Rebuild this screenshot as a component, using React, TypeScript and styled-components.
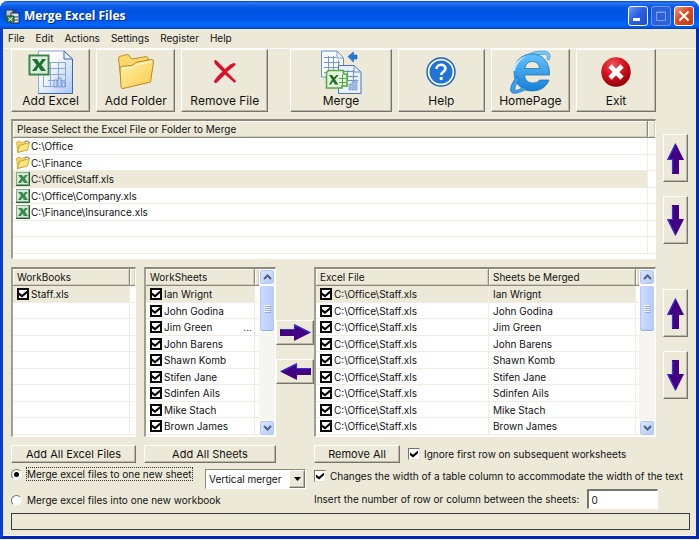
import React, { useState } from 'react';
import styled, { createGlobalStyle, css } from 'styled-components';

const face = '#ece9d8';
const line = '#f0ede0';
const shadow = '#8d8a7d';

const GlobalStyle = createGlobalStyle`
  * { box-sizing: border-box; }
  body { margin: 0; background: #f2f4f8; font: 10px/14px Inter, 'Liberation Sans', sans-serif; color: #111; }
  button, input, select { font: inherit; color: inherit; margin: 0; padding: 0; }
  svg { display: block; }
`;

const raised = css`
  background: ${face};
  border: 1px solid;
  border-color: #fff #77756b #77756b #fff;
  box-shadow: inset -1px -1px 0 #bbb8a9;
  border-radius: 0;
`;

const Frame = styled.div`
  min-height: 100vh;
  padding: 1px 0;
  display: flex;
  flex-direction: column;
`;

const WindowBox = styled.main`
  flex: 1;
  display: flex;
  flex-direction: column;
  background: ${face};
  border: 3px solid #0a3fd6;
  border-top: 0;
  border-right-color: #0427b4;
  border-bottom-color: #0427b4;
  border-radius: 8px 8px 0 0;
  box-shadow: inset 0 -1px 0 #f6f4ea;
`;

const TitleBar = styled.header`
  height: 28px;
  margin: 0 -3px;
  padding: 2px 5px 0;
  display: flex;
  align-items: center;
  gap: 4px;
  border-radius: 8px 8px 0 0;
  background: linear-gradient(#0a41c8 0, #2c7bf5 2px, #0a5be8 5px, #0053e0 10px, #0057e8 18px, #0567fb 24px, #0458e4 26px, #0340b8 28px);
`;

const Title = styled.h1`
  flex: 1;
  margin: 0;
  font: bold 12px/18px 'Open Sans', 'Noto Sans', sans-serif;
  color: #fff;
  text-shadow: 1px 1px 0 #0a2a80;
`;

const Caption = styled.div`
  display: flex;
  gap: 3px;
`;

const CaptionButton = styled.button<{ $tone?: 'close' | 'dim' }>`
  width: 20px;
  height: 20px;
  display: grid;
  place-items: center;
  border: 1px solid ${p => (p.$tone === 'dim' ? '#6f97ee' : '#fff')};
  border-radius: 3px;
  background: ${p =>
    p.$tone === 'close'
      ? 'linear-gradient(135deg, #ec9a82, #dd4a22 45%, #c23a14)'
      : p.$tone === 'dim'
        ? '#2b5fdc'
        : 'linear-gradient(135deg, #6f9af8, #2b60e4 45%, #1c4ccc)'};
`;

const MenuBar = styled.nav`
  height: 19px;
  padding: 0 5px 2px;
  display: flex;
  align-items: center;
  gap: 11px;
`;

const MenuItem = styled.button`
  border: 0;
  background: none;
  line-height: 14px;
`;

const Toolbar = styled.div`
  display: flex;
  gap: 6px;
  padding: 0 40px 0 8px;
  border-top: 1px solid #fbfaf5;
`;

const ToolButton = styled.button<{ $grow: number; $apart?: boolean }>`
  ${raised}
  flex: ${p => p.$grow} 1 0;
  min-width: 0;
  height: 63px;
  margin-left: ${p => (p.$apart ? 16 : 0)}px;
  display: flex;
  flex-direction: column;
  align-items: center;
  font-size: 12px;
  line-height: 16px;
  white-space: nowrap;
`;

const ToolIcon = styled.span`
  height: 43px;
  display: grid;
  place-items: center;
`;

const Body = styled.div`
  padding: 7px 8px 0;
  display: grid;
  grid-template-columns: minmax(0, 303fr) minmax(0, 342fr) 32px;
  row-gap: 8px;
`;

const Panel = styled.section<{ $wide?: boolean; $tall?: boolean }>`
  ${p => p.$wide && 'grid-column: 1 / 3;'}
  min-width: 0;
  min-height: ${p => (p.$tall ? 170 : 140)}px;
  display: flex;
  background: #fff;
  border: 1px solid #fff;
  border-width: 2px 1px 1px 2px;
  border-top-color: ${shadow};
  border-left-color: #a19e90;
`;

const Table = styled.table`
  flex: 1;
  align-self: flex-start;
  width: 0;
  table-layout: fixed;
  border-collapse: separate;
  border-spacing: 0;
`;

const Col = styled.col<{ $w?: number }>`
  ${p => p.$w && `width: ${p.$w}px;`}
`;

const HeadCell = styled.th`
  height: 17px;
  padding: 0 0 0 4px;
  text-align: left;
  font-weight: normal;
  white-space: nowrap;
  overflow: hidden;
  background: ${face};
  border-right: 1px solid ${shadow};
  border-bottom: 1px solid ${shadow};
  box-shadow: inset 1px 1px 0 #faf9f2, inset -1px -1px 0 #d0cdbd;
  &:last-child { border-right: 0; }
`;

const Row = styled.tr<{ $selected?: boolean }>`
  height: 17px;
  &:nth-child(even) { height: 16px; }
  ${p => p.$selected && `td:not(:last-child) { background: ${face}; }`}
`;

const Cell = styled.td<{ $inset?: number }>`
  padding: 0 0 0 ${p => p.$inset ?? 0}px;
  border-right: 1px solid ${line};
  border-bottom: 1px solid ${line};
  line-height: 14px;
  white-space: nowrap;
  overflow: hidden;
  &:last-child { border-right: 0; }
`;

const Entry = styled.span<{ $gap: number }>`
  height: 14px;
  display: flex;
  align-items: center;
  gap: ${p => p.$gap}px;
`;

const More = styled.span`
  margin-left: auto;
  padding-right: 2px;
`;

const Tick = styled.input<{ $bold?: boolean }>`
  appearance: none;
  flex: none;
  width: 12px;
  height: 12px;
  display: grid;
  place-items: center;
  background: #fff;
  border: 1px solid;
  border-color: #77756b #e4e1d2 #e4e1d2 #77756b;
  ${p => p.$bold && 'border: 2px solid #0a0a0a;'}
  &:checked::before {
    content: '';
    width: 8px;
    height: 7px;
    background: #000;
    clip-path: polygon(0 30%, 38% 62%, 100% 0, 100% 38%, 38% 100%, 0 68%);
  }
`;

const Radio = styled.input`
  appearance: none;
  flex: none;
  width: 11px;
  height: 11px;
  display: grid;
  place-items: center;
  background: #fff;
  border: 1px solid;
  border-color: #77756b #f4f2e8 #f4f2e8 #77756b;
  border-radius: 50%;
  &:checked::before {
    content: '';
    width: 5px;
    height: 5px;
    border-radius: 50%;
    background: #000;
  }
`;

const ScrollBar = styled.div`
  width: 16px;
  flex: none;
  display: flex;
  flex-direction: column;
  background: #f6f5ef;
`;

const ScrollButton = styled.button`
  height: 16px;
  display: grid;
  place-items: center;
  background: linear-gradient(135deg, #dfe9ff, #b2c8f6);
  border: 1px solid #fff;
  border-radius: 3px;
  box-shadow: inset 0 0 0 1px #b4c8f2;
`;

const Thumb = styled.div`
  height: 47px;
  display: grid;
  place-items: center;
  background: linear-gradient(90deg, #cddcff, #b6cbfa);
  border: 1px solid #fff;
  border-radius: 3px;
  box-shadow: inset 0 -1px 0 #8fa9de, inset 1px 0 0 #b4c8f2;
`;

const Gap = styled.div`
  flex: 1;
`;

const Movers = styled.div<{ $raise?: boolean }>`
  margin-left: 7px;
  grid-column: 3;
  display: flex;
  flex-direction: column;
  justify-content: center;
  gap: 14px;
  padding-bottom: ${p => (p.$raise ? 16 : 0)}px;
`;

const MoveButton = styled.button`
  ${raised}
  height: 48px;
  display: grid;
  place-items: center;
`;

const Sources = styled.div`
  display: grid;
  grid-template-columns: minmax(0, 125fr) 8px minmax(0, 132fr) 38px;
  > :nth-child(2) { grid-column: 3; }
`;

const Transfer = styled.div`
  grid-column: 4;
  display: flex;
  flex-direction: column;
  justify-content: center;
  gap: 14px;
`;

const TransferButton = styled.button`
  ${raised}
  height: 25px;
  display: grid;
  place-items: center;
`;

const Options = styled.div<{ $gap: number; $span?: boolean }>`
  ${p => p.$span && 'grid-column: 2 / 4;'}
  display: flex;
  flex-direction: column;
  gap: ${p => p.$gap}px;
`;

const PushButton = styled.button<{ $w?: number }>`
  ${raised}
  ${p => p.$w && `width: ${p.$w}px;`}
  height: 18px;
  font-size: 11px;
  line-height: 14px;
  white-space: nowrap;
`;

const Line = styled.div<{ $h: number }>`
  height: ${p => p.$h}px;
  display: flex;
  align-items: center;
  gap: 8px;
`;

const Choice = styled.label`
  height: 14px;
  display: flex;
  align-items: center;
  gap: 4px;
  white-space: nowrap;
`;

const Focus = styled.span<{ $on?: boolean }>`
  height: 14px;
  line-height: 14px;
  outline: ${p => (p.$on ? '1px dotted #333' : 'none')};
  outline-offset: -1px;
  padding: 0 1px;
`;

const SelectBox = styled.div`
  display: grid;
  width: 101px;
  height: 20px;
  margin: 2px 0 0 auto;
  background: #fff;
  border: 1px solid;
  border-color: #8d8a7d #fff #fff #8d8a7d;
  > * { grid-area: 1 / 1; }
`;

const Select = styled.select`
  appearance: none;
  border: 0;
  background: none;
  padding-left: 3px;
  outline: 0;
`;

const SelectArrow = styled.span`
  ${raised}
  justify-self: end;
  width: 16px;
  display: grid;
  place-items: center;
  pointer-events: none;
`;

const MergeMode = styled.div`
  display: flex;
  height: 22px;
  padding-right: 8px;
`;

const NumberInput = styled.input`
  flex: none;
  width: 71px;
  height: 20px;
  padding: 0 2px;
  background: #fff;
  border: 1px solid;
  border-color: #77756b #fff #fff #77756b;
  border-width: 2px 1px 1px 2px;
  outline: 0;
`;

const StatusBar = styled.footer`
  height: 17px;
  margin: 4px 6px 5px 8px;
  border: 1px solid #3c3b36;
`;

const Chevron = ({ down }: { down?: boolean }) => (
  <svg width="9" height="6" viewBox="0 0 9 6"><path d={down ? 'M1 1l3.5 3.5L8 1' : 'M1 5l3.5-3.5L8 5'} fill="none" stroke="#4d6185" strokeWidth="2" /></svg>
);

const angles = { up: 0, right: 90, down: 180, left: 270 };

const edges = {
  up: 'M5.5 30V16.5H1L8.5 1',
  down: 'M11.5 30V16.5H16L8.5 1',
  right: 'M5.5 30V16.5H1L8.5 1',
  left: 'M11.5 30V16.5H16L8.5 1',
};

function Arrow({ dir }: { dir: keyof typeof angles }) {
  const flat = dir === 'left' || dir === 'right';
  return (
    <svg width={flat ? 31 : 17} height={flat ? 17 : 31} viewBox={flat ? '-7 7 31 17' : '0 0 17 31'}>
      <g transform={`rotate(${angles[dir]} 8.5 15.5)`}>
        <path d="M8.5 0L17 17H12V31H5V17H0Z" fill="#430080" />
        <path d={edges[dir]} fill="none" stroke="#3334e6" strokeWidth="1.2" />
      </g>
    </svg>
  );
}

const SheetIcon = () => (
  <svg width="46" height="44" viewBox="0 0 46 44">
    <defs><linearGradient id="page" x1="0" y1="0" x2="1" y2="1"><stop offset=".3" stopColor="#fff" /><stop offset="1" stopColor="#a9c6f4" /></linearGradient></defs>
    <path d="M10.5 1H36L44.5 9V43.5H10.5Z" fill="url(#page)" stroke="#8baee0" />
    <path d="M44.5 9V43.5H10.5" fill="none" stroke="#3f66aa" />
    <path d="M36 1V9H44.5Z" fill="#eaf1fc" stroke="#3f66aa" />
    <path d="M20 12.5H38M20 18.5H38M20 24.5H38M20 30.5H38M15 36.5H38M22.5 12V36M30.5 12V36M37.5 12V36M15.5 26V36" stroke="#86a8dc" fill="none" />
    <path d="M26 30h3v7h-3zM30 28h3v9h-3zM34 32h3v5h-3z" fill="#c9dbf6" stroke="#5f86c4" strokeWidth=".8" />
    <rect x="1.5" y="5.5" width="19" height="19" fill="#fff" stroke="#3c8148" strokeWidth="2" />
    <rect x="3" y="7" width="16" height="16" fill="#d9efdc" />
    <path d="M4 9h5l2.500 4L14 9h4l-4.500 6 4.500 6h-5L10.500 17 8 21H4l4.500-6z" fill="#216f33" />
  </svg>
);

const FolderIcon = () => (
  <svg width="38" height="38" viewBox="0 0 38 38">
    <defs><linearGradient id="fold" x1="0" y1="0" x2="1" y2="1"><stop offset="0" stopColor="#fff3a8" /><stop offset="1" stopColor="#fbc94c" /></linearGradient></defs>
    <path d="M1.500 6Q1.500 3 4 3L10 1.500Q12 1.500 13 4L15 6 29 3.500Q31 3.500 31 6L32 27 5 34Z" fill="#fbd76b" stroke="#c08f2c" />
    <path d="M3 16Q3 13.500 5 13.300L15 12.500 19 9.500 34 6.500Q37 6.500 36.500 9L33.500 29 6 35.500Q4.500 36 4 34Z" fill="url(#fold)" stroke="#b98522" />
    <path d="M5 15.500L15.500 14.500 19.500 11.500 35 8.500" fill="none" stroke="#fffbe0" />
  </svg>
);

const RemoveIcon = () => (
  <svg width="24" height="25" viewBox="0 0 24 25">
    <path d="M1 2Q2 0 4 2L12 10Q18 4 21 4Q23 4 22.500 6L14 13 23 22Q23 24 21 23.500L12 15.500 4 23.500Q1 25 1 22Q4 17 9.500 12.500L2 5Z" fill="#d9102c" />
  </svg>
);

const MergeIcon = () => (
  <svg width="42" height="44" viewBox="0 0 42 44">
    <path d="M1.500 1H17L23.500 8V27H1.500Z" fill="#f6f9ff" stroke="#6f8fc4" />
    <path d="M17 1V8H23.500M4 7.500H16M4 12.500H20M4 17.500H20M4 22.500H20M8.500 6V24M13.500 6V24M18.500 10V24" fill="none" stroke="#7799cf" />
    <path d="M18.500 15.500H34L41 22V43.500H18.500Z" fill="#e9f1ff" stroke="#4f75b4" />
    <path d="M34 15.500V22H41M22 21.500H33M22 26.500H38M26 30.500H38M27.500 20V31M33.500 20V32" fill="none" stroke="#6c8fca" />
    <path d="M29 34h2v6h-2zM32 32h2v8h-2zM35 30h2v10h-2z" fill="#b3caef" stroke="#6083bf" strokeWidth=".6" />
    <path d="M28 6.500L33.500 2V5H37V9H33.500V12Z" fill="#2878dc" stroke="#1557b0" strokeWidth=".6" />
    <path d="M6.500 38V24Q6.500 20.500 10 20.500H23.500V24H27V36H22V38Z" fill="#e6f5df" stroke="#57a83f" strokeWidth="1.600" />
    <path d="M9 25h3l2 2.500L16.500 25h2l-3.500 4.500 3.500 5H15L13 31.500 11 34.500H9l3-5z" fill="#1f6f28" />
    <path d="M19 28.500H26M19 32.500H26M22.500 25V37" stroke="#57a83f" />
  </svg>
);

const HelpIcon = () => (
  <svg width="30" height="30" viewBox="0 0 30 30">
    <circle cx="15" cy="15" r="14" fill="#f6faff" stroke="#1c5fb8" strokeWidth="1.400" />
    <circle cx="15" cy="15" r="11.500" fill="#2173d6" />
    <path d="M10.500 12C10.500 6.500 19.500 6.500 19.500 11.500C19.500 14.800 15.200 14.600 15.200 18" fill="none" stroke="#fff" strokeWidth="2.600" />
    <circle cx="15.200" cy="21.500" r="1.700" fill="#fff" />
  </svg>
);

const BrowserIcon = () => (
  <svg width="44" height="44" viewBox="0 0 44 44">
    <defs><linearGradient id="ie" x1="0" y1="0" x2="0" y2="1"><stop offset="0" stopColor="#62c2fa" /><stop offset="1" stopColor="#167fd8" /></linearGradient></defs>
    <path d="M5 20C10 8 24 0 36 1C42 1.500 43.500 6 41 10L39 9C40 5 38 4 34 4.500C24 5 12 12 5 20Z" fill="#74cbf7" stroke="#2d87c6" strokeWidth=".6" />
    <path d="M6 22C6 11 14 4 24 4C34.500 4 42 12 41.500 25H16.500C17 30.500 20.500 33 25 33C28 33 30.500 32 31.500 30H41C38.500 37 32 41 24.500 41C13.500 41 6 33.500 6 22ZM17 18.500H31.500C31 13.500 28 11.500 24.300 11.500C20.500 11.500 17.500 14 17 18.500Z" fill="url(#ie)" stroke="#1669b4" strokeWidth=".7" fillRule="evenodd" />
    <path d="M9 26C2 35 1 41.500 4.500 43C8.500 44.500 15 40.500 19 39.500L15.500 37C10 40.500 7.500 41 7 39.500C6.500 38 8 34 11 30Z" fill="#3a9fe8" stroke="#1669b4" strokeWidth=".6" />
    <path d="M4 21C6 12 14 7 18 6C12 10 8 15 7 21Z" fill="#c6ebfc" />
  </svg>
);

const ExitIcon = () => (
  <svg width="30" height="30" viewBox="0 0 30 30">
    <defs><radialGradient id="exit" cx=".4" cy=".25" r=".8"><stop offset="0" stopColor="#f0505a" /><stop offset=".5" stopColor="#d4101c" /><stop offset="1" stopColor="#8c0008" /></radialGradient></defs>
    <circle cx="15" cy="15" r="14.700" fill="url(#exit)" />
    <path d="M9 9L21 21M21 9L9 21" stroke="#fff" strokeWidth="4.600" />
  </svg>
);

const SmallFolder = () => (
  <svg width="14" height="13" viewBox="0 0 14 13">
    <path d="M.5 2L4 1 5 2.500 9 1.500V10L1.500 12.500Z" fill="#f6d65a" stroke="#c9a63a" strokeWidth=".7" />
    <path d="M1.500 12.500L3.500 5.500 13.500 2.500 11.500 10Z" fill="#ffe678" stroke="#a8871e" strokeWidth=".7" />
    <path d="M9 1.500Q12 0 13.500 2.500" fill="none" stroke="#6d6840" />
  </svg>
);

const SmallSheet = () => (
  <svg width="14" height="14" viewBox="0 0 14 14">
    <rect width="14" height="14" fill="#7fae88" />
    <path d="M1 1H12V12H1Z" fill="#d5e8d6" />
    <path d="M2 3h4l1.500 2L9 3h3L9 6.500 12 11H8L6.500 8.500 5 11H2l3-4.500z" fill="#3a8a4b" />
    <path d="M13.500 0V13.500H0" fill="none" stroke="#2c5c38" />
  </svg>
);

const AppIcon = () => (
  <svg width="15" height="15" viewBox="0 0 15 15">
    <path d="M1 1h7v9H1z" fill="#b9c6da" stroke="#26344e" />
    <path d="M6 4h8v10H6z" fill="#dfe6f0" stroke="#1e2b44" />
    <path d="M9 3l3-3M8 8h5M8 11h5" stroke="#2b3d5f" />
    <path d="M2 7h7v6H2z" fill="#3f8b45" stroke="#184a22" />
    <path d="M3.500 8.500l4 3.500M7.500 8.500l-4 3.500" stroke="#fff" />
  </svg>
);

function Scroller() {
  return (
    <ScrollBar>
      <ScrollButton aria-label="Scroll up"><Chevron /></ScrollButton>
      <Thumb>
        <svg width="7" height="8" viewBox="0 0 7 8"><path d="M0 .5H6M0 2.500H6M0 4.500H6M0 6.500H6" stroke="#f2f6ff" /><path d="M1 1.500H7M1 3.500H7M1 5.500H7M1 7.500H7" stroke="#93ade2" /></svg>
      </Thumb>
      <Gap />
      <ScrollButton aria-label="Scroll down"><Chevron down /></ScrollButton>
    </ScrollBar>
  );
}

function MoverPair({ raise, of }: { raise?: boolean; of: string }) {
  return (
    <Movers $raise={raise}>
      <MoveButton aria-label={`Move ${of} up`}><Arrow dir="up" /></MoveButton>
      <MoveButton aria-label={`Move ${of} down`}><Arrow dir="down" /></MoveButton>
    </Movers>
  );
}

const tools = [
  { name: 'Add Excel', grow: 79, Icon: SheetIcon },
  { name: 'Add Folder', grow: 79, Icon: FolderIcon },
  { name: 'Remove File', grow: 87, Icon: RemoveIcon },
  { name: 'Merge', grow: 102, Icon: MergeIcon, apart: true },
  { name: 'Help', grow: 87, Icon: HelpIcon },
  { name: 'HomePage', grow: 79, Icon: BrowserIcon },
  { name: 'Exit', grow: 80, Icon: ExitIcon },
];

const paths = ['C:\\Office', 'C:\\Finance', 'C:\\Office\\Staff.xls', 'C:\\Office\\Company.xls', 'C:\\Finance\\Insurance.xls', '', ''];
const sheets = ['Ian Wrignt', 'John Godina', 'Jim Green', 'John Barens', 'Shawn Komb', 'Stifen Jane', 'Sdinfen Ails', 'Mike Stach', 'Brown James'];
const books = ['Staff.xls', ...Array(8).fill('')];

export default function App() {
  const [mode, setMode] = useState('sheet');
  return (
    <Frame>
      <GlobalStyle />
      <WindowBox>
        <TitleBar>
          <AppIcon />
          <Title>Merge Excel Files</Title>
          <Caption>
            <CaptionButton aria-label="Minimize"><svg width="12" height="12"><path d="M1 9.500H8" stroke="#fff" strokeWidth="3" /></svg></CaptionButton>
            <CaptionButton $tone="dim" aria-label="Maximize"><svg width="12" height="12"><path d="M1.500 2H10.500V10.500H1.500ZM1 2.500H11" fill="none" stroke="#7d9fee" /></svg></CaptionButton>
            <CaptionButton $tone="close" aria-label="Close"><svg width="12" height="12"><path d="M1.500 1.500L10.500 10.500M10.500 1.500L1.500 10.500" stroke="#fff" strokeWidth="2" /></svg></CaptionButton>
          </Caption>
        </TitleBar>
        <MenuBar>
          {['File', 'Edit', 'Actions', 'Settings', 'Register', 'Help'].map(m => <MenuItem key={m}>{m}</MenuItem>)}
        </MenuBar>
        <Toolbar>
          {tools.map(({ name, grow, Icon, apart }) => (
            <ToolButton key={name} $grow={grow} $apart={apart}><ToolIcon><Icon /></ToolIcon>{name}</ToolButton>
          ))}
        </Toolbar>
        <Body>
          <Panel $wide>
            <Table>
              <colgroup><Col /><Col $w={7} /></colgroup>
              <thead><tr><HeadCell>Please Select the Excel File or Folder to Merge</HeadCell><HeadCell as="td" /></tr></thead>
              <tbody>
                {paths.map((p, i) => (
                  <Row key={i} $selected={i === 2}>
                    <Cell $inset={3}>{p && <Entry $gap={1}>{p.endsWith('.xls') ? <SmallSheet /> : <SmallFolder />}{p}</Entry>}</Cell>
                    <Cell />
                  </Row>
                ))}
              </tbody>
            </Table>
          </Panel>
          <MoverPair of="file" />

          <Sources>
            <Panel $tall>
              <Table>
                <colgroup><Col /><Col $w={5} /></colgroup>
                <thead><tr><HeadCell>WorkBooks</HeadCell><HeadCell as="td" /></tr></thead>
                <tbody>
                  {books.map((b, i) => (
                    <Row key={i} $selected={i === 0}>
                      <Cell $inset={4}>{b && <Entry as="label" $gap={2}><Tick $bold type="checkbox" defaultChecked />{b}</Entry>}</Cell>
                      <Cell />
                    </Row>
                  ))}
                </tbody>
              </Table>
            </Panel>
            <Panel $tall>
              <Table>
                <colgroup><Col /><Col $w={4} /></colgroup>
                <thead><tr><HeadCell>WorkSheets</HeadCell><HeadCell as="td" /></tr></thead>
                <tbody>
                  {sheets.map((s, i) => (
                    <Row key={s} $selected={i === 0}>
                      <Cell $inset={4}><Entry as="label" $gap={2}><Tick $bold type="checkbox" defaultChecked />{s}{i === 2 && <More>...</More>}</Entry></Cell>
                      <Cell />
                    </Row>
                  ))}
                </tbody>
              </Table>
              <Scroller />
            </Panel>
            <Transfer>
              <TransferButton aria-label="Add to merge list"><Arrow dir="right" /></TransferButton>
              <TransferButton aria-label="Remove from merge list"><Arrow dir="left" /></TransferButton>
            </Transfer>
          </Sources>
          <Panel $tall>
            <Table>
              <colgroup><Col $w={173} /><Col /><Col $w={3} /></colgroup>
              <thead><tr><HeadCell>Excel File</HeadCell><HeadCell>Sheets be Merged</HeadCell><HeadCell as="td" /></tr></thead>
              <tbody>
                {sheets.map((s, i) => (
                  <Row key={s} $selected={i === 0}>
                    <Cell $inset={4}><Entry as="label" $gap={2}><Tick $bold type="checkbox" defaultChecked />C:\Office\Staff.xls</Entry></Cell>
                    <Cell $inset={4}>{s}</Cell>
                    <Cell />
                  </Row>
                ))}
              </tbody>
            </Table>
            <Scroller />
          </Panel>
          <MoverPair raise of="sheet" />

          <Options $gap={4}>
            <Sources>
              <PushButton>Add All Excel Files</PushButton>
              <PushButton>Add All Sheets</PushButton>
            </Sources>
            <MergeMode>
              <Choice><Radio type="radio" name="mode" checked={mode === 'sheet'} onChange={() => setMode('sheet')} /><Focus $on={mode === 'sheet'}>Merge excel files to one new sheet</Focus></Choice>
              <SelectBox>
                <Select aria-label="Merge direction" defaultValue="v"><option value="v">Vertical merger</option><option value="h">Horizontal merger</option></Select>
                <SelectArrow><svg width="7" height="4"><path d="M0 0H7L3.500 4Z" /></svg></SelectArrow>
              </SelectBox>
            </MergeMode>
            <Choice><Radio type="radio" name="mode" checked={mode === 'book'} onChange={() => setMode('book')} /><Focus $on={mode === 'book'}>Merge excel files into one new workbook</Focus></Choice>
          </Options>
          <Options $gap={6} $span>
            <Line $h={18}>
              <PushButton $w={86}>Remove All</PushButton>
              <Choice><Tick type="checkbox" defaultChecked />Ignore first row on subsequent worksheets</Choice>
            </Line>
            <Choice><Tick type="checkbox" defaultChecked />Changes the width of a table column to accommodate the width of the text</Choice>
            <Line $h={20}>
              <Choice htmlFor="rows">Insert the number of row or column between the sheets:</Choice>
              <NumberInput id="rows" type="text" defaultValue="0" />
            </Line>
          </Options>
        </Body>
        <StatusBar />
      </WindowBox>
    </Frame>
  );
}
